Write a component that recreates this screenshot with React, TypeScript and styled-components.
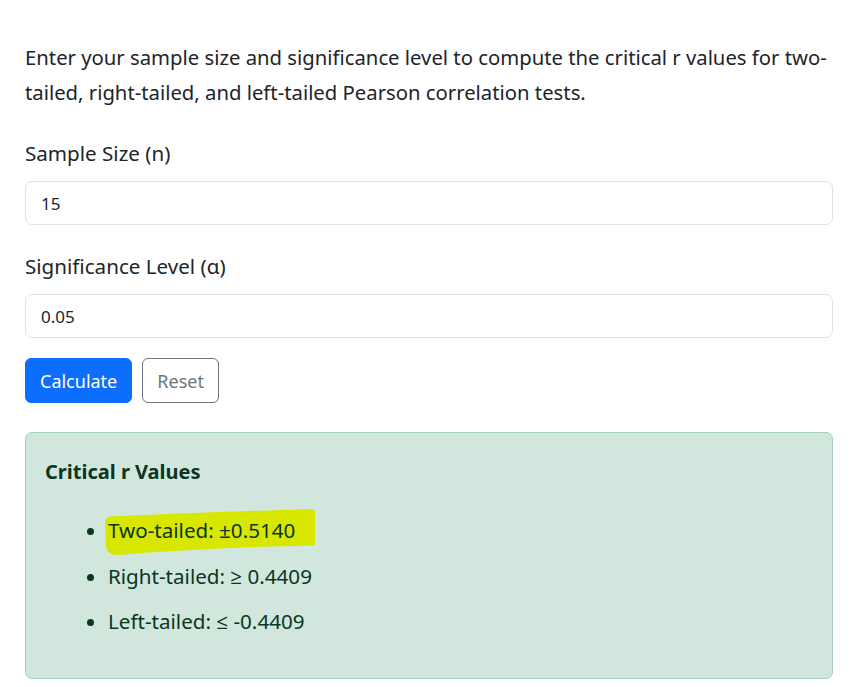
import * as React from "react";
import styled, { createGlobalStyle } from "styled-components";

const GlobalStyle = createGlobalStyle`
  html, body {
    margin: 0;
    padding: 0;
    background: #ffffff;
  }
  body {
    font-family: "Noto Sans", "Open Sans", sans-serif;
    color: #212529;
  }
  * {
    box-sizing: border-box;
  }
`;

interface ResultRow {
  label: string;
  value: string;
  marked?: boolean;
}

const rows: ResultRow[] = [
  { label: "Two-tailed", value: "±0.5140", marked: true },
  { label: "Right-tailed", value: "≥ 0.4409" },
  { label: "Left-tailed", value: "≤ -0.4409" },
];

export default function App() {
  return (
    <>
      <GlobalStyle />
      <Page>
        <Intro>
          Enter your sample size and significance level to compute the critical r values for
          two-tailed, right-tailed, and left-tailed Pearson correlation tests.
        </Intro>

        <Field>
          <Label htmlFor="n">Sample Size (n)</Label>
          <Input id="n" type="text" defaultValue="15" />
        </Field>

        <Field>
          <Label htmlFor="alpha">Significance Level (α)</Label>
          <Input id="alpha" type="text" defaultValue="0.05" />
        </Field>

        <Actions>
          <Button variant="primary">Calculate</Button>
          <Button variant="outline">Reset</Button>
        </Actions>

        <Alert>
          <AlertTitle>Critical r Values</AlertTitle>
          <List>
            {rows.map((row) => (
              <Item key={row.label}>
                {row.marked ? (
                  <Marked>
                    <Highlight viewBox="0 0 212 50" preserveAspectRatio="none">
                      <path
                        d="M3 9 C 60 6, 150 3, 208 1 L 211 3 L 211 39 C 150 40, 70 44, 12 49 C 6 49, 2 46, 1 41 L 0 14 Z"
                        fill="#d7e700"
                      />
                    </Highlight>
                    <span>
                      {row.label}: {row.value}
                    </span>
                  </Marked>
                ) : (
                  <span>
                    {row.label}: {row.value}
                  </span>
                )}
              </Item>
            ))}
          </List>
        </Alert>
      </Page>
    </>
  );
}

const Page = styled.main`
  width: 851px;
  padding: 40px 18px 0 25px;
  display: flex;
  flex-direction: column;
`;

const Intro = styled.p`
  margin: 0 0 28px;
  font-size: 20.3px;
  line-height: 35px;
  color: #212529;
`;

const Field = styled.div`
  display: flex;
  flex-direction: column;
  gap: 13px;
  margin-bottom: 26px;

  & + & {
    margin-bottom: 20px;
  }
`;

const Label = styled.label`
  font-size: 20.6px;
  line-height: 30px;
  color: #212529;
`;

const Input = styled.input`
  width: 100%;
  height: 44px;
  padding: 0 15px;
  border: 1px solid #dee2e6;
  border-radius: 7px;
  background: #ffffff;
  font-family: "Noto Sans", "Open Sans", sans-serif;
  font-size: 17px;
  color: #212529;
  outline: none;
`;

const Actions = styled.div`
  display: flex;
  gap: 10px;
  margin-bottom: 29px;
`;

const Button = styled.button<{ variant: "primary" | "outline" }>`
  height: 45px;
  padding: 0 14px;
  border-radius: 6px;
  font-family: "Noto Sans", "Open Sans", sans-serif;
  font-size: 18px;
  cursor: pointer;
  border: 1px solid ${({ variant }) => (variant === "primary" ? "#0d6efd" : "#6c757d")};
  background: ${({ variant }) => (variant === "primary" ? "#0d6efd" : "#ffffff")};
  color: ${({ variant }) => (variant === "primary" ? "#ffffff" : "#6c757d")};
`;

const Alert = styled.section`
  height: 247px;
  padding: 24px 19px 0;
  border: 1px solid #a3cfbb;
  border-radius: 7px;
  background: #d1e7dd;
  color: #0a3622;
`;

const AlertTitle = styled.h4`
  margin: 0 0 28px;
  font-size: 20px;
  font-weight: 700;
  line-height: 30px;
`;

const List = styled.ul`
  margin: 0;
  padding-left: 63px;
  display: flex;
  flex-direction: column;
  gap: 15.5px;
`;

const Item = styled.li`
  font-size: 20.6px;
  line-height: 30px;
`;

const Marked = styled.span`
  position: relative;
  display: inline-block;

  & > span {
    position: relative;
  }
`;

const Highlight = styled.svg`
  position: absolute;
  left: -3px;
  top: -7px;
  width: 211px;
  height: 48px;
`;
